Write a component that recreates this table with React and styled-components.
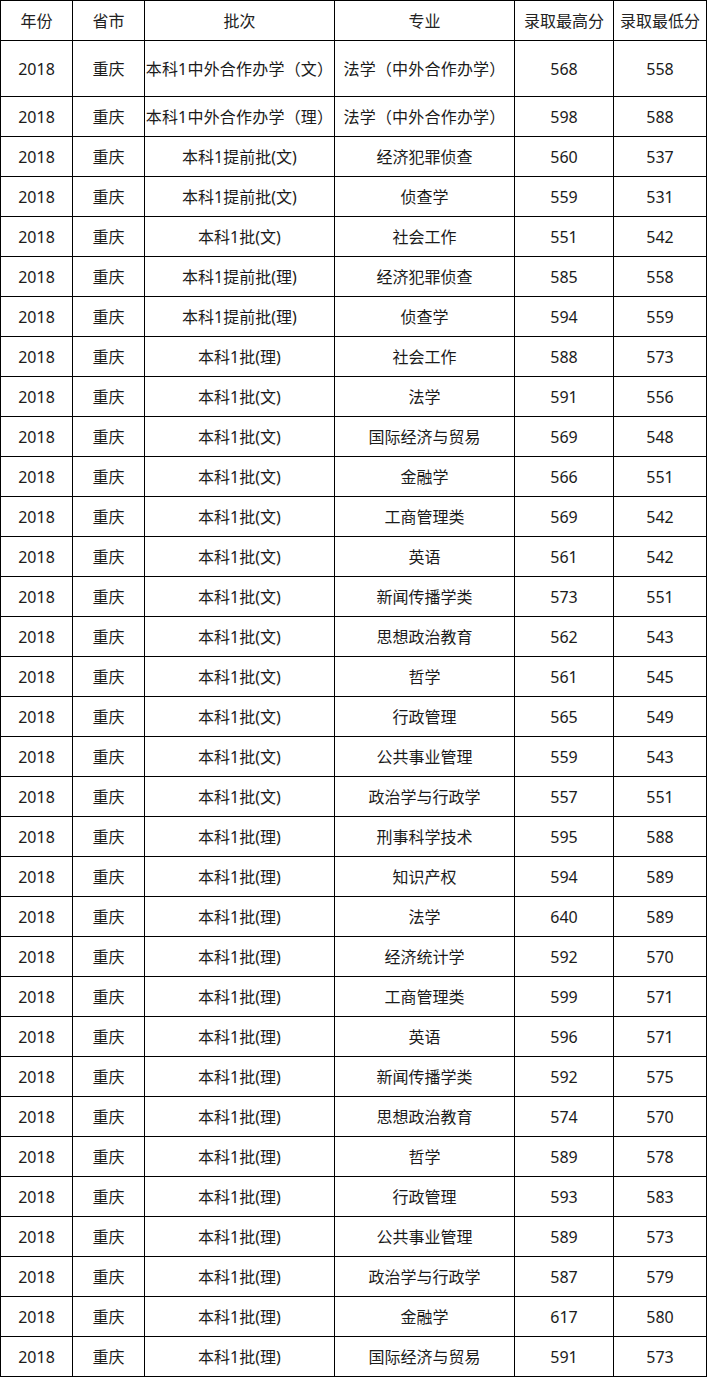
import React from "react";
import styled, { createGlobalStyle } from "styled-components";

const GlobalStyle = createGlobalStyle`
  html, body { margin: 0; padding: 0; background: #ffffff; }
  body {
    font-family: "Noto Sans", "Noto Sans CJK SC", sans-serif;
    color: #1b1b1b;
  }
`;

const Table = styled.div`
  display: grid;
  grid-template-columns: 72px 72px 190px 180px 99px 93px;
  grid-template-rows: 40px 56px repeat(32, 40px);
  width: 707px;
  box-sizing: border-box;
  border-left: 1px solid #000;
  border-top: 1px solid #000;
`;

const Cell = styled.div`
  box-sizing: border-box;
  border-right: 1px solid #000;
  border-bottom: 1px solid #000;
  display: flex;
  align-items: center;
  justify-content: center;
  font-size: 16px;
  line-height: 1;
  white-space: nowrap;
  color: ${(p) => (p.$head ? "#222" : "#1b1b1b")};
`;

const Wide = styled.span`
  letter-spacing: 0.2px;
`;

const headers = ["年份", "省市", "批次", "专业", "录取最高分", "录取最低分"];

const rows = [
  ["本科1中外合作办学（文）", "法学（中外合作办学）", 568, 558],
  ["本科1中外合作办学（理）", "法学（中外合作办学）", 598, 588],
  ["本科1提前批(文)", "经济犯罪侦查", 560, 537],
  ["本科1提前批(文)", "侦查学", 559, 531],
  ["本科1批(文)", "社会工作", 551, 542],
  ["本科1提前批(理)", "经济犯罪侦查", 585, 558],
  ["本科1提前批(理)", "侦查学", 594, 559],
  ["本科1批(理)", "社会工作", 588, 573],
  ["本科1批(文)", "法学", 591, 556],
  ["本科1批(文)", "国际经济与贸易", 569, 548],
  ["本科1批(文)", "金融学", 566, 551],
  ["本科1批(文)", "工商管理类", 569, 542],
  ["本科1批(文)", "英语", 561, 542],
  ["本科1批(文)", "新闻传播学类", 573, 551],
  ["本科1批(文)", "思想政治教育", 562, 543],
  ["本科1批(文)", "哲学", 561, 545],
  ["本科1批(文)", "行政管理", 565, 549],
  ["本科1批(文)", "公共事业管理", 559, 543],
  ["本科1批(文)", "政治学与行政学", 557, 551],
  ["本科1批(理)", "刑事科学技术", 595, 588],
  ["本科1批(理)", "知识产权", 594, 589],
  ["本科1批(理)", "法学", 640, 589],
  ["本科1批(理)", "经济统计学", 592, 570],
  ["本科1批(理)", "工商管理类", 599, 571],
  ["本科1批(理)", "英语", 596, 571],
  ["本科1批(理)", "新闻传播学类", 592, 575],
  ["本科1批(理)", "思想政治教育", 574, 570],
  ["本科1批(理)", "哲学", 589, 578],
  ["本科1批(理)", "行政管理", 593, 583],
  ["本科1批(理)", "公共事业管理", 589, 573],
  ["本科1批(理)", "政治学与行政学", 587, 579],
  ["本科1批(理)", "金融学", 617, 580],
  ["本科1批(理)", "国际经济与贸易", 591, 573],
];

const render = (t) => (String(t).includes("（") ? <Wide>{t}</Wide> : t);

export default function App() {
  return (
    <>
      <GlobalStyle />
      <Table role="table">
        {headers.map((h) => (
          <Cell key={h} $head role="columnheader">
            {h}
          </Cell>
        ))}
        {rows.map((r, i) => (
          <React.Fragment key={i}>
            <Cell role="cell">2018</Cell>
            <Cell role="cell">重庆</Cell>
            <Cell role="cell">{render(r[0])}</Cell>
            <Cell role="cell">{render(r[1])}</Cell>
            <Cell role="cell">{r[2]}</Cell>
            <Cell role="cell">{r[3]}</Cell>
          </React.Fragment>
        ))}
      </Table>
    </>
  );
}
